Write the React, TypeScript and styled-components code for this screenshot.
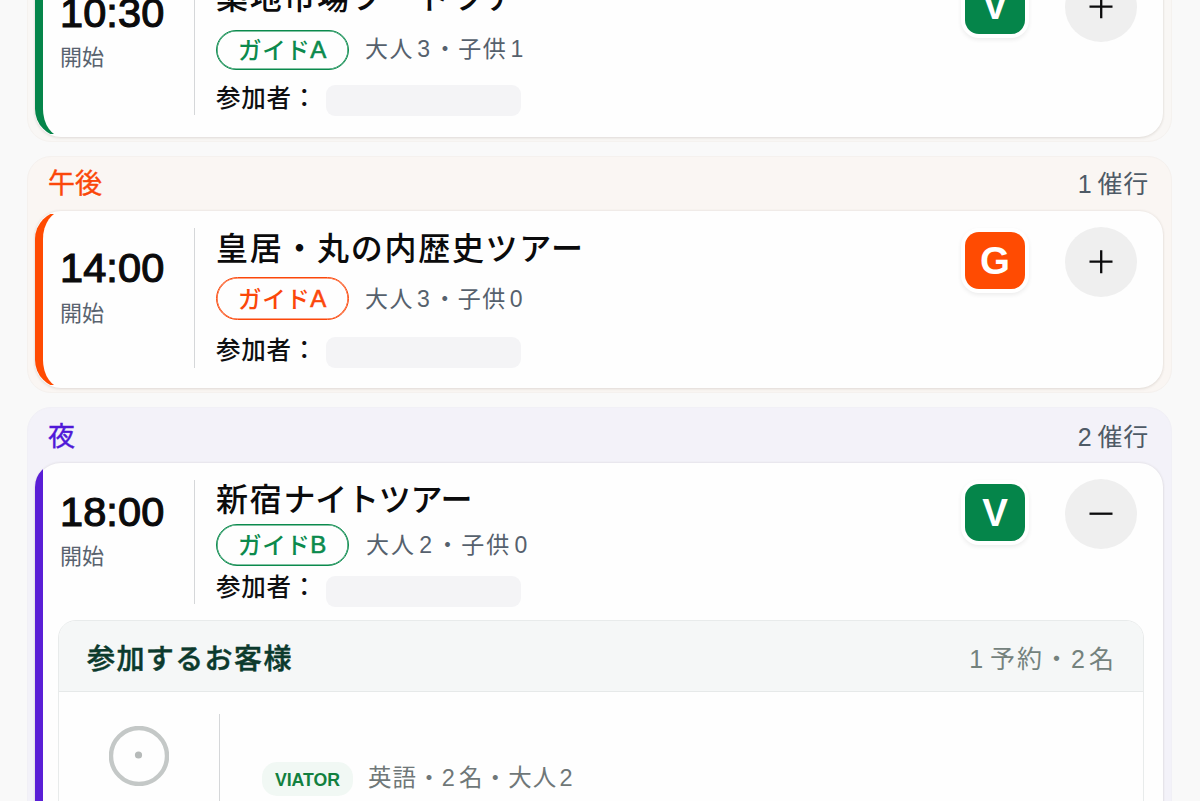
import React from 'react';
import styled, { createGlobalStyle } from 'styled-components';

interface Tone {
  line: string;
  label: string;
  surface: string;
  edge: string;
}

interface CardMetrics {
  height: number;
  padTop: number;
  timeTop: number;
  startGap: number;
  titleTop: number;
  pillGap: number;
  pillHeight: number;
  metaShift: number;
  peopleGap: number;
  peopleShift: number;
  dividerHeight: number;
  metaLead: number;
  metaSpacing: number;
}

interface TourCardProps {
  time: string;
  title: React.ReactNode;
  guide: string;
  adults: number;
  kids: number;
  source: 'V' | 'G';
  stripe: string;
  guideColor: string;
  open?: boolean;
  metrics: CardMetrics;
  details?: React.ReactNode;
}

const MORNING: Tone = {
  line: '#05854a',
  label: '#05854a',
  surface: '#f9f7f5',
  edge: '#f5f2ef',
};
const AFTERNOON: Tone = {
  line: '#ff4b02',
  label: '#fb470a',
  surface: '#faf6f3',
  edge: '#f5f1ee',
};
const NIGHT: Tone = {
  line: '#5a1ed6',
  label: '#4f18d8',
  surface: '#f3f2f9',
  edge: '#f1f0f6',
};

const GlobalStyle = createGlobalStyle`
  * {
    box-sizing: border-box;
  }
  body {
    margin: 0;
    background: #f9f9f9;
    font-family: 'Liberation Sans', 'Noto Sans CJK JP', sans-serif;
    overflow: hidden;
  }
`;

const Page = styled.main`
  height: 801px;
  padding: 0 27px;
  overflow: hidden;
  display: flex;
  flex-direction: column;
`;

const Section = styled.section<{ $tone: Tone; $height: number; $gap: number }>`
  flex: none;
  width: 1145px;
  height: ${(p) => p.$height}px;
  margin-top: ${(p) => p.$gap}px;
  padding: 0 7px;
  border: 1px solid ${(p) => p.$tone.edge};
  border-radius: 24px;
  background: ${(p) => p.$tone.surface};
`;

const SectionHeader = styled.header<{ $height: number; $top?: number }>`
  display: flex;
  justify-content: space-between;
  align-items: center;
  height: ${(p) => p.$height}px;
  padding: ${(p) => p.$top ?? 0}px 15px 0 13px;
`;

const SectionLabel = styled.h2<{ $color: string }>`
  margin: 0;
  font-size: 27px;
  line-height: 40px;
  font-weight: 400;
  color: ${(p) => p.$color};
  -webkit-text-stroke: 0.4px currentColor;
`;

const SectionCount = styled.span`
  font-size: 25px;
  line-height: 40px;
  letter-spacing: 0.8px;
  color: #4e5a66;
`;

const Digit = styled.span<{ $before?: number; $after?: number }>`
  margin-left: ${(p) => p.$before ?? 0}px;
  margin-right: ${(p) => p.$after ?? 0}px;
`;

const Card = styled.article<{ $height: number }>`
  position: relative;
  width: 1128px;
  height: ${(p) => p.$height}px;
  border-radius: 26px 24px 24px 26px;
  background: #fefefe;
  box-shadow: 0 0 2px 1px rgba(70, 50, 40, 0.07), 0 2px 3px rgba(70, 50, 40, 0.05);
`;

const Stripe = styled.span<{ $color: string; $straight?: boolean }>`
  position: absolute;
  inset: 0 auto 0 0;
  width: ${(p) => (p.$straight ? 8 : 30)}px;
  ${(p) =>
    p.$straight
      ? `background: ${p.$color}; clip-path: inset(0 -30px 0 0 round 24px 0 0 0);`
      : `border-left: 8px solid ${p.$color}; border-radius: 28px 0 0 28px; clip-path: inset(3px 0);`}
`;

const CardTop = styled.div<{ $pad: number }>`
  display: flex;
  align-items: flex-start;
  padding: ${(p) => p.$pad}px 26px 0 25px;
`;

const TimeColumn = styled.div<{ $top: number }>`
  width: 134px;
  padding-top: ${(p) => p.$top}px;
`;

const Time = styled.div`
  font-size: 41.5px;
  line-height: 42px;
  color: #0b0b0c;
  letter-spacing: 0.1px;
  -webkit-text-stroke: 1.2px #0b0b0c;
`;

const StartLabel = styled.div<{ $gap: number }>`
  margin-top: ${(p) => p.$gap}px;
  font-size: 22px;
  line-height: 30px;
  color: #59636f;
`;

const Divider = styled.div<{ $height: number }>`
  width: 1px;
  height: ${(p) => p.$height}px;
  margin-top: 1px;
  background: #d5d7d9;
`;

const Body = styled.div<{ $top: number }>`
  flex: 1;
  padding: ${(p) => p.$top}px 0 0 21px;
`;

const Title = styled.h3`
  margin: 0;
  font-size: 32px;
  line-height: 40px;
  font-weight: 500;
  letter-spacing: 1.7px;
  white-space: nowrap;
  color: #0b0b0c;
`;

const Kana = styled.span`
  letter-spacing: -0.2px;
`;

const MetaRow = styled.div<{ $gap: number }>`
  display: flex;
  align-items: center;
  margin-top: ${(p) => p.$gap}px;
`;

const GuidePill = styled.span<{ $color: string; $height: number }>`
  display: flex;
  align-items: center;
  justify-content: center;
  width: 133px;
  height: ${(p) => p.$height}px;
  padding-bottom: 2px;
  border: 1px solid ${(p) => p.$color};
  border-radius: 22px;
  box-shadow: inset 0 0 0 0.6px ${(p) => p.$color};
  font-size: 23.5px;
  font-weight: 500;
  letter-spacing: 0.6px;
  color: ${(p) => p.$color};
`;

const GuideLetter = styled.span`
  padding-top: 2px;
  font-size: 24px;
  font-weight: 400;
  -webkit-text-stroke: 0.6px currentColor;
`;

const Meta = styled.span<{ $lead: number; $spacing: number; $shift: number }>`
  margin-left: ${(p) => p.$lead}px;
  padding-bottom: ${(p) => p.$shift}px;
  font-size: 23px;
  line-height: 30px;
  letter-spacing: ${(p) => p.$spacing}px;
  color: #56616d;
`;

const People = styled.div<{ $gap: number }>`
  display: flex;
  align-items: center;
  margin-top: ${(p) => p.$gap}px;
  height: 31px;
`;

const PeopleLabel = styled.span<{ $shift: number }>`
  width: 110px;
  padding-bottom: ${(p) => p.$shift}px;
  font-size: 24.5px;
  line-height: 30px;
  font-weight: 500;
  letter-spacing: 0.8px;
  white-space: nowrap;
  color: #0e0f11;
`;

const NameMask = styled.span`
  width: 195px;
  height: 31px;
  border-radius: 9px;
  background: #f4f4f6;
`;

const SourceBadge = styled.div<{ $color: string }>`
  display: flex;
  align-items: center;
  justify-content: center;
  width: 60px;
  height: 57px;
  margin: 5px 40px 0 0;
  border-radius: 14px;
  background: ${(p) => p.$color};
  box-shadow: 0 0 0 4px #fff, 0 2px 4px 4px rgba(0, 0, 0, 0.07);
  font-size: 38.5px;
  line-height: 57px;
  font-weight: 700;
  color: #fff;
`;

const ToggleButton = styled.button`
  display: flex;
  align-items: center;
  justify-content: center;
  width: 72px;
  height: 70px;
  padding: 0;
  border: 0;
  border-radius: 50%;
  background: #efefef;
`;

const Details = styled.div`
  width: 1086px;
  height: 260px;
  margin: 13px 0 0 23px;
  border: 1.5px solid #e8ebeb;
  border-radius: 18px;
  overflow: hidden;
`;

const DetailsHeader = styled.div`
  display: flex;
  justify-content: space-between;
  align-items: center;
  height: 71px;
  padding: 6px 27px 0 28px;
  border-bottom: 1.5px solid #e6e9e9;
  background: #f5f7f7;
`;

const DetailsTitle = styled.h4`
  margin: 0;
  padding-top: 2px;
  font-size: 28px;
  line-height: 40px;
  font-weight: 500;
  letter-spacing: 1.4px;
  color: #0c3a2d;
  -webkit-text-stroke: 0.5px currentColor;
`;

const DetailsCount = styled.span`
  font-size: 25px;
  line-height: 40px;
  letter-spacing: 2px;
  color: #74827d;
`;

const Booking = styled.div`
  display: flex;
  height: 190px;
  padding-top: 21px;
`;

const CheckColumn = styled.div`
  display: flex;
  flex-direction: column;
  align-items: center;
  width: 160px;
  padding-top: 13px;
`;

const BookingInfo = styled.div`
  display: flex;
  align-items: center;
  height: 34px;
  margin: 49px 0 0 42px;
`;

const SourceTag = styled.span`
  width: 91px;
  height: 34px;
  border-radius: 15px;
  background: #f1f8f4;
  text-align: center;
  font-size: 17.7px;
  line-height: 36px;
  font-weight: 700;
  color: #12803f;
`;

const BookingText = styled.span`
  margin-left: 15px;
  padding-bottom: 2px;
  font-size: 23.5px;
  line-height: 30px;
  letter-spacing: 1.1px;
  color: #6f7778;
`;

function ToggleIcon({ open }: { open?: boolean }): React.JSX.Element {
  return (
    <svg width="24" height="24" viewBox="0 0 24 24" stroke="#0b0b0c" strokeWidth="2.3">
      <path d={open ? 'M0.5 11.7H23.5' : 'M0.5 11.7H23.5M12.2 0.2V23.2'} />
    </svg>
  );
}

function TourCard(props: TourCardProps): React.JSX.Element {
  const m = props.metrics;
  return (
    <Card $height={m.height}>
      <Stripe $color={props.stripe} $straight={props.open} />
      <CardTop $pad={m.padTop}>
        <TimeColumn $top={m.timeTop}>
          <Time>{props.time}</Time>
          <StartLabel $gap={m.startGap}>開始</StartLabel>
        </TimeColumn>
        <Divider $height={m.dividerHeight} />
        <Body $top={m.titleTop}>
          <Title>{props.title}</Title>
          <MetaRow $gap={m.pillGap}>
            <GuidePill $color={props.guideColor} $height={m.pillHeight}>
              ガイド<GuideLetter>{props.guide}</GuideLetter>
            </GuidePill>
            <Meta $lead={m.metaLead} $spacing={m.metaSpacing} $shift={m.metaShift}>
              大人<Digit $before={3} $after={2}>{props.adults}</Digit>・子供
              <Digit $before={3}>{props.kids}</Digit>
            </Meta>
          </MetaRow>
          <People $gap={m.peopleGap}>
            <PeopleLabel $shift={m.peopleShift}>参加者：</PeopleLabel>
            <NameMask />
          </People>
        </Body>
        <SourceBadge $color={props.source === 'V' ? '#05854a' : '#ff4b02'}>
          {props.source}
        </SourceBadge>
        <ToggleButton type="button" aria-expanded={!!props.open}>
          <ToggleIcon open={props.open} />
        </ToggleButton>
      </CardTop>
      {props.details}
    </Card>
  );
}

function CustomerDetails(): React.JSX.Element {
  return (
    <Details>
      <DetailsHeader>
        <DetailsTitle>参加するお客様</DetailsTitle>
        <DetailsCount>
          <Digit $after={5}>1</Digit>予約・<Digit $after={2}>2</Digit>名
        </DetailsCount>
      </DetailsHeader>
      <Booking>
        <CheckColumn>
          <svg width="60" height="60" viewBox="0 0 60 60">
            <circle cx="30" cy="30" r="28" fill="none" stroke="#c4c8c7" strokeWidth="4.4" />
            <circle cx="29.5" cy="29" r="3.6" fill="#b6bab9" />
          </svg>
        </CheckColumn>
        <Divider $height={180} />
        <BookingInfo>
          <SourceTag>VIATOR</SourceTag>
          <BookingText>
            英語・<Digit $after={3}>2</Digit>名・大人<Digit $before={2}>2</Digit>
          </BookingText>
        </BookingInfo>
      </Booking>
    </Details>
  );
}

export default function App(): React.JSX.Element {
  return (
    <Page>
      <GlobalStyle />
      <Section $tone={MORNING} $height={242} $gap={-100}>
        <SectionHeader $height={60} />
        <TourCard
          time="10:30"
          title="築地市場フードツアー"
          guide="A"
          adults={3}
          kids={1}
          source="V"
          stripe={MORNING.line}
          guideColor="#0b8a4d"
          metrics={{
            height: 176, padTop: 11, timeTop: 20, startGap: 9, titleTop: 6,
            pillGap: 12, pillHeight: 40, metaShift: 2, peopleGap: 15, peopleShift: 4,
            dividerHeight: 142, metaLead: 16, metaSpacing: 1.6,
          }}
        />
      </Section>
      <Section $tone={AFTERNOON} $height={237} $gap={14}>
        <SectionHeader $height={54}>
          <SectionLabel $color={AFTERNOON.label}>午後</SectionLabel>
          <SectionCount><Digit $after={5}>1</Digit>催行</SectionCount>
        </SectionHeader>
        <TourCard
          time="14:00"
          title="皇居・丸の内歴史ツアー"
          guide="A"
          adults={3}
          kids={0}
          source="G"
          stripe={AFTERNOON.line}
          guideColor="#fb470a"
          metrics={{
            height: 177, padTop: 16, timeTop: 20, startGap: 10, titleTop: 2,
            pillGap: 8, pillHeight: 43, metaShift: 0, peopleGap: 17, peopleShift: 3,
            dividerHeight: 140, metaLead: 16, metaSpacing: 1.5,
          }}
        />
      </Section>
      <Section $tone={NIGHT} $height={480} $gap={14}>
        <SectionHeader $height={55} $top={3}>
          <SectionLabel $color={NIGHT.label}>夜</SectionLabel>
          <SectionCount><Digit $after={5}>2</Digit>催行</SectionCount>
        </SectionHeader>
        <TourCard
          time="18:00"
          title={<>新宿<Kana>ナイトツアー</Kana></>}
          guide="B"
          adults={2}
          kids={0}
          source="V"
          stripe={NIGHT.line}
          guideColor="#0b8a4d"
          open
          metrics={{
            height: 440, padTop: 16, timeTop: 12, startGap: 9, titleTop: 1,
            pillGap: 4, pillHeight: 42, metaShift: 0, peopleGap: 10, peopleShift: 7,
            dividerHeight: 124, metaLead: 17, metaSpacing: 2.1,
          }}
          details={<CustomerDetails />}
        />
      </Section>
    </Page>
  );
}
